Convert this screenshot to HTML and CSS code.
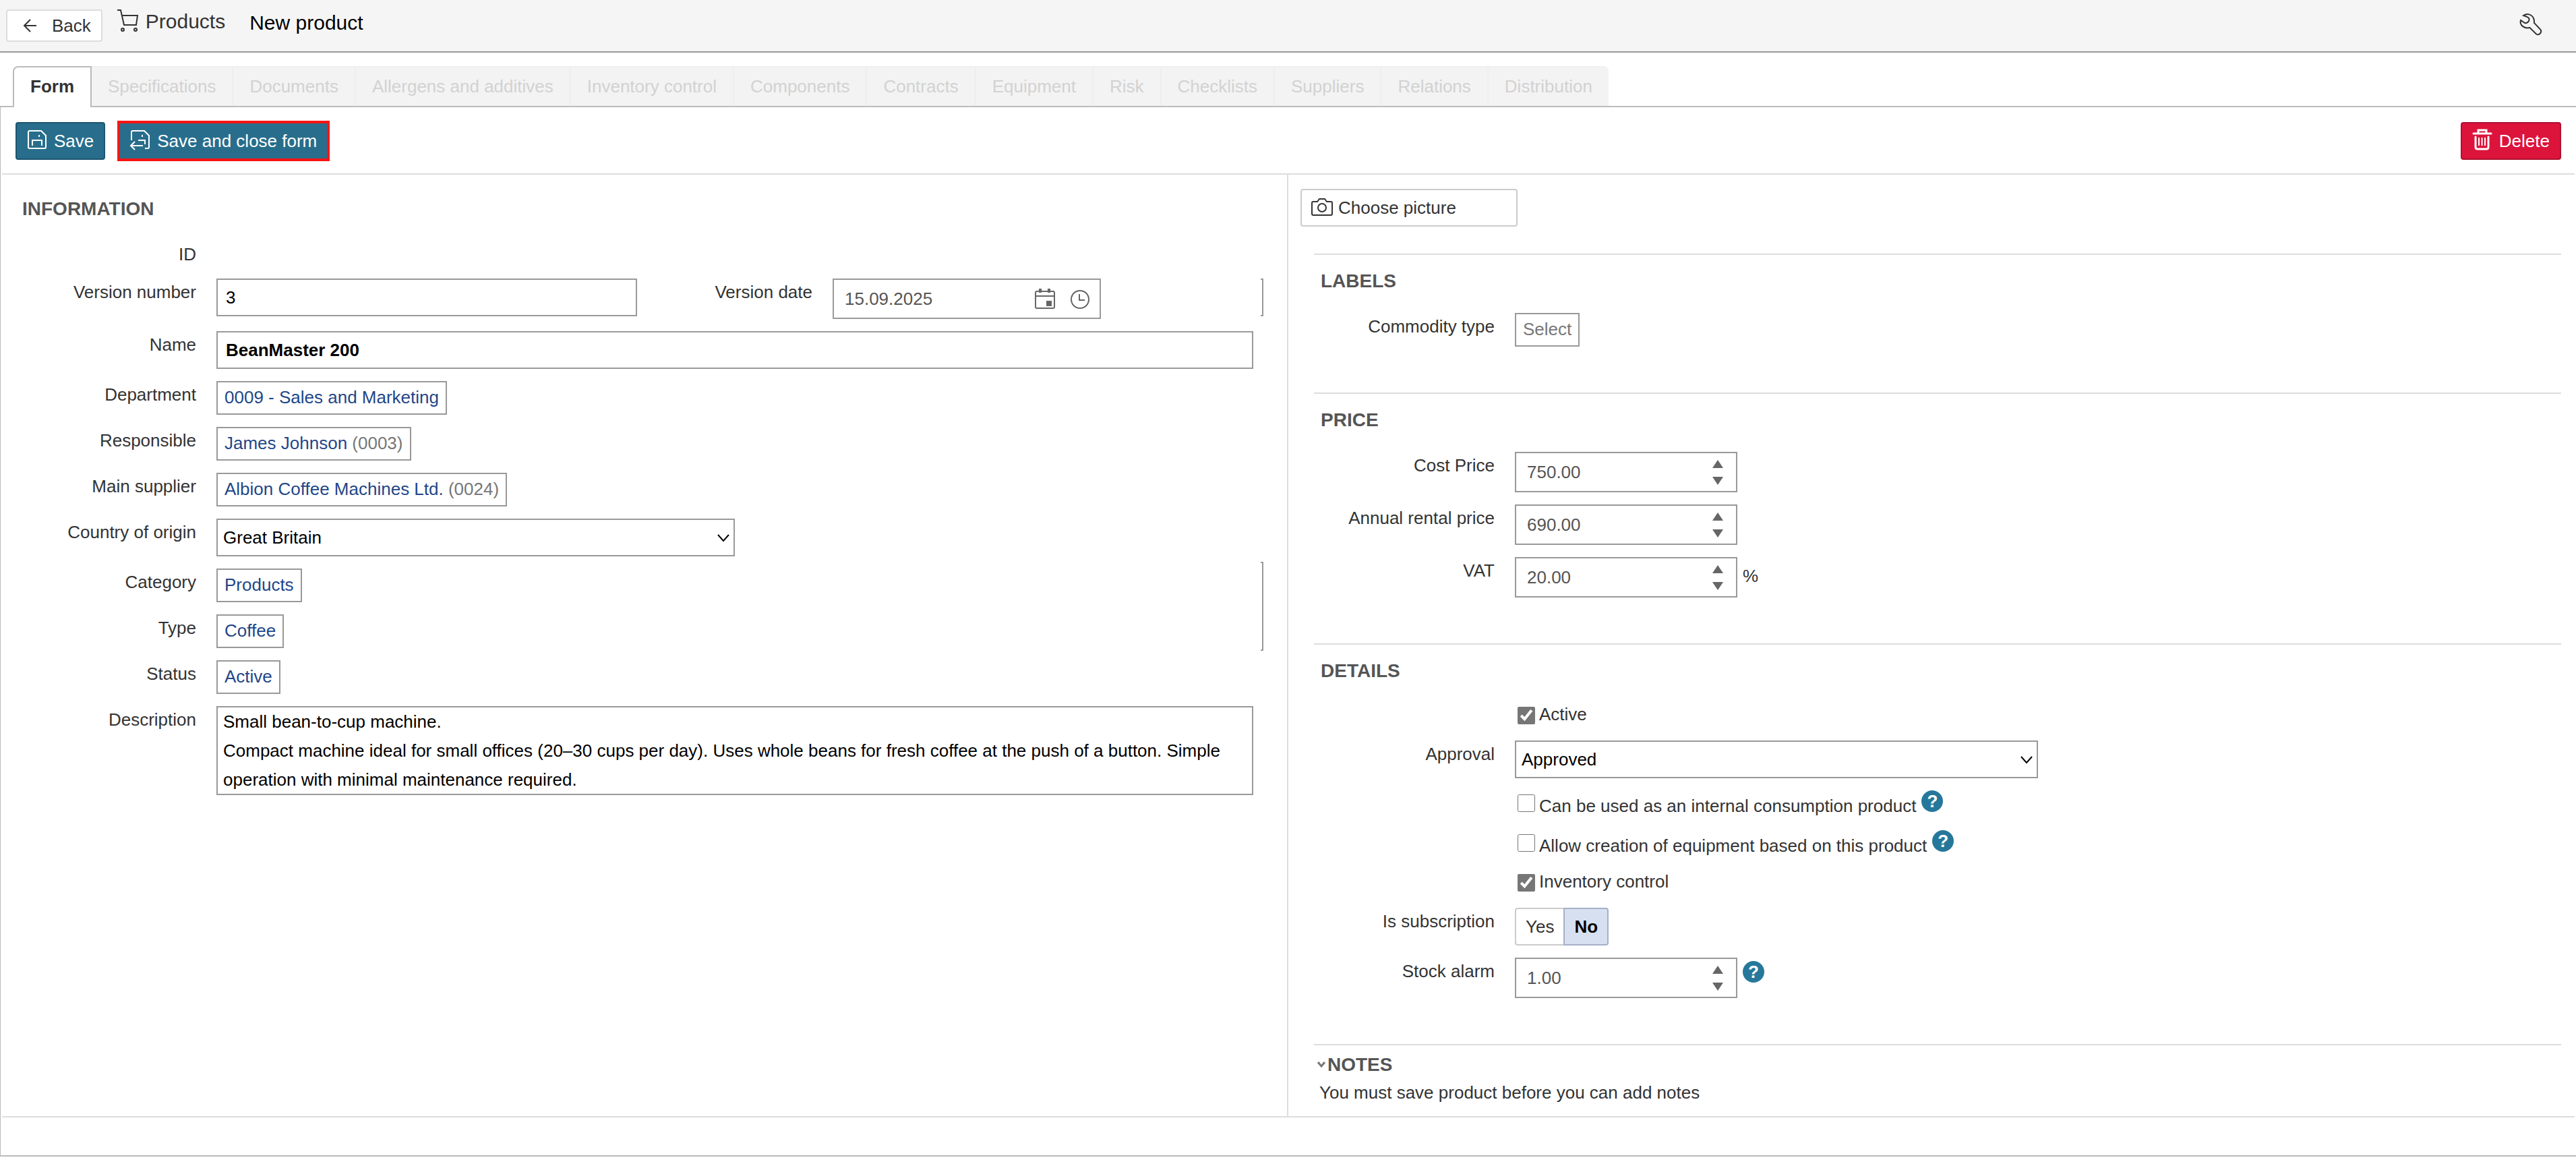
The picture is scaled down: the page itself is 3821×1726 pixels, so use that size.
FILE: index.html
```
<!DOCTYPE html>
<html lang="en">
<head>
  <meta charset="UTF-8" />
  <meta name="viewport" content="width=device-width, initial-scale=1.0"/>
  <title>New product - Products</title>
  <link rel="stylesheet" href="styles.css">
</head>
<body>

  <!-- TOP BAR -->
  <header class="top-bar">
    <button type="button" class="back-btn">
      <svg width="20" height="20" viewBox="0 0 20 20"><path d="M10 1 L1 10 L10 19 M1 10 H19" /></svg>
      Back
    </button>
    <a href="#" class="module-link">
      <svg width="34" height="34" viewBox="0 0 34 34">
        <path d="M0 1 H5 L10 23 H28 L30 9 H7" />
        <circle cx="8" cy="30" r="2" /><circle cx="27" cy="30" r="2" />
      </svg>
      Products
    </a>
    <h1>New product</h1>
    <button type="button" class="settings-btn" title="Settings">
      <svg width="34" height="34" viewBox="0 0 34 34">
        <path d="M6 4 C13 -1 23 4 22 15 L31.500 25 C34 29 29 34 25 31.500 L15.500 22 C7 24 0 18 2 11 L8 15 C12 16 15 12 14.500 9 C14 6 9 5 6 4 Z" />
      </svg>
    </button>
  </header>

  <!-- TABS -->
  <nav class="tabs">
    <button type="button" class="tab active">Form</button>
    <button type="button" class="tab" disabled>Specifications</button>
    <button type="button" class="tab" disabled>Documents</button>
    <button type="button" class="tab" disabled>Allergens and additives</button>
    <button type="button" class="tab" disabled>Inventory control</button>
    <button type="button" class="tab" disabled>Components</button>
    <button type="button" class="tab" disabled>Contracts</button>
    <button type="button" class="tab" disabled>Equipment</button>
    <button type="button" class="tab" disabled>Risk</button>
    <button type="button" class="tab" disabled>Checklists</button>
    <button type="button" class="tab" disabled>Suppliers</button>
    <button type="button" class="tab" disabled>Relations</button>
    <button type="button" class="tab" disabled>Distribution</button>
  </nav>

  <form class="panel">
    <div class="toolbar">
      <button type="button" class="btn save-btn">
        <svg width="30" height="30" viewBox="0 0 30 30">
          <path d="M4 0 H21 L28 7 V24 Q28 26 26 26 H4 Q2 26 2 24 V2 Q2 0 4 0 Z M8 22 V14 H22 V22 M18 6 V9" />
        </svg>
        Save
      </button>
      <button type="button" class="btn save-btn highlighted">
        <svg width="30" height="30" viewBox="0 0 30 30">
          <path d="M2 14 V2 Q2 0 4 0 H21 L28 7 V24 Q28 26 26 26 H22 M12 14 H22 V20 M18 6 V9 M7 16 L1 22 L7 28 M1 22 H19" />
        </svg>
        Save and close form
      </button>
      <button type="button" class="btn delete-btn">
        <svg width="30" height="30" viewBox="0 0 30 30">
          <path class="bin" d="M2 4 H28 M9 4 V-1 H21 V4 M5 9 V24 Q5 27 8 27 H21 Q24 27 24 24 V9" />
          <path d="M10 10 V22 M14.500 10 V22 M19 10 V22" />
        </svg>
        Delete
      </button>
    </div>

    <div class="columns">
      <!-- INFORMATION -->
      <div class="left-column">
        <h2>INFORMATION</h2>
        <div class="fields">
          <span class="label">ID</span>
          <div class="field"></div>

          <label class="label" for="versionNumber">Version number</label>
          <div class="field">
            <input type="text" class="text-input version-input" id="versionNumber" value="3" />
            <label class="label date-label" for="versionDate">Version date</label>
            <div class="input-box date-box">
              <input type="text" id="versionDate" value="15.09.2025" />
              <button type="button" title="Calendar">
                <svg width="30" height="32" viewBox="0 0 30 32">
                  <path d="M3 5 H27 Q29 5 29 7 V28 Q29 30 27 30 H3 Q1 30 1 28 V7 Q1 5 3 5 Z M1 12 H29" />
                  <path class="fill" d="M6 1 H10 V7 H6 Z M19 1 H23 V7 H19 Z M17 19 H25 V27 H17 Z" />
                </svg>
              </button>
              <button type="button" title="Clock">
                <svg width="30" height="32" viewBox="0 0 30 32">
                  <circle cx="15" cy="17" r="13" /><path d="M14 9 V18 H22" />
                </svg>
              </button>
            </div>
            <div class="bracket"></div>
          </div>

          <label class="label" for="productName">Name</label>
          <div class="field"><input type="text" class="text-input name-input" id="productName" value="BeanMaster 200" /></div>

          <span class="label">Department</span>
          <div class="field"><div class="chip"><a href="#">0009 - Sales and Marketing</a></div></div>

          <span class="label">Responsible</span>
          <div class="field"><div class="chip"><a href="#">James Johnson</a> (0003)</div></div>

          <span class="label">Main supplier</span>
          <div class="field"><div class="chip"><a href="#">Albion Coffee Machines Ltd.</a> (0024)</div></div>

          <label class="label" for="country">Country of origin</label>
          <div class="field">
            <div class="select-box">
              <select id="country"><option>Great Britain</option></select>
              <svg width="18" height="12" viewBox="0 0 18 12"><path d="M1 1 L9 10 L17 1" /></svg>
            </div>
          </div>

          <!-- category and type are linked -->
          <div class="linked">
            <div class="fields">
              <span class="label">Category</span>
              <div class="field"><div class="chip"><a href="#">Products</a></div></div>

              <span class="label">Type</span>
              <div class="field"><div class="chip"><a href="#">Coffee</a></div></div>
            </div>
            <div class="bracket"></div>
          </div>

          <span class="label">Status</span>
          <div class="field"><div class="chip"><a href="#">Active</a></div></div>

          <label class="label" for="description">Description</label>
          <div class="field">
            <textarea id="description" rows="3">Small bean-to-cup machine.
Compact machine ideal for small offices (20–30 cups per day). Uses whole beans for fresh coffee at the push of a button. Simple operation with minimal maintenance required.</textarea>
          </div>
        </div>
      </div>

      <div class="right-column">
        <button type="button" class="picture-btn">
          <svg width="32" height="28" viewBox="0 0 32 28">
            <path d="M3 5 H9 L12 1 H20 L23 5 H29 Q31 5 31 7 V23 Q31 25 29 25 H3 Q1 25 1 23 V7 Q1 5 3 5 Z" />
            <circle cx="16" cy="14" r="6" />
          </svg>
          Choose picture
        </button>

        <!-- LABELS -->
        <section>
          <h2>LABELS</h2>
          <div class="fields">
            <span class="label">Commodity type</span>
            <div class="field"><button type="button" class="chip">Select</button></div>
          </div>
        </section>

        <!-- PRICE -->
        <section>
          <h2>PRICE</h2>
          <div class="fields">
            <label class="label" for="costPrice">Cost Price</label>
            <div class="field">
              <div class="input-box number-box">
                <input type="text" id="costPrice" value="750.00" />
                <div class="spinner"><button type="button" class="up" title="Increase"></button><button type="button" class="down" title="Decrease"></button></div>
              </div>
            </div>

            <label class="label" for="rentalPrice">Annual rental price</label>
            <div class="field">
              <div class="input-box number-box">
                <input type="text" id="rentalPrice" value="690.00" />
                <div class="spinner"><button type="button" class="up" title="Increase"></button><button type="button" class="down" title="Decrease"></button></div>
              </div>
            </div>

            <label class="label" for="vat">VAT</label>
            <div class="field">
              <div class="input-box number-box">
                <input type="text" id="vat" value="20.00" />
                <div class="spinner"><button type="button" class="up" title="Increase"></button><button type="button" class="down" title="Decrease"></button></div>
              </div>
              <span class="unit">%</span>
            </div>
          </div>
        </section>

        <!-- DETAILS -->
        <section>
          <h2>DETAILS</h2>
          <div class="fields">
            <div class="field check">
              <input type="checkbox" id="active" checked />
              <label for="active">Active</label>
            </div>

            <label class="label" for="approval">Approval</label>
            <div class="field">
              <div class="select-box">
                <select id="approval"><option>Approved</option></select>
                <svg width="18" height="12" viewBox="0 0 18 12"><path d="M1 1 L9 10 L17 1" /></svg>
              </div>
            </div>

            <div class="field check with-help">
              <input type="checkbox" id="internalUse" />
              <label for="internalUse">Can be used as an internal consumption product</label>
              <button type="button" class="help">?</button>
            </div>

            <div class="field check with-help">
              <input type="checkbox" id="equipmentBase" />
              <label for="equipmentBase">Allow creation of equipment based on this product</label>
              <button type="button" class="help">?</button>
            </div>

            <div class="field check">
              <input type="checkbox" id="inventory" checked />
              <label for="inventory">Inventory control</label>
            </div>

            <span class="label">Is subscription</span>
            <div class="field toggle">
              <input type="radio" name="subscription" id="subYes" />
              <label for="subYes">Yes</label>
              <input type="radio" name="subscription" id="subNo" checked />
              <label for="subNo">No</label>
            </div>

            <label class="label" for="stockAlarm">Stock alarm</label>
            <div class="field">
              <div class="input-box number-box">
                <input type="text" id="stockAlarm" value="1.00" />
                <div class="spinner"><button type="button" class="up" title="Increase"></button><button type="button" class="down" title="Decrease"></button></div>
              </div>
              <button type="button" class="help stock-help">?</button>
            </div>
          </div>
        </section>

        <!-- NOTES -->
        <section class="notes">
          <h2><svg width="14" height="12" viewBox="0 0 14 12"><path d="M2 2 L7 8 L12 2" /></svg>NOTES</h2>
          <p>You must save product before you can add notes</p>
        </section>
      </div>
    </div>

    <div class="panel-footer"></div>
  </form>

</body>
</html>
```

FILE: styles.css
```
* {
  box-sizing: border-box;
  margin: 0;
  padding: 0;
}

body {
  font-family: "Liberation Sans", Arial, sans-serif;
  font-size: 26px;
  color: #333;
  background: #fff;
}

button, input, select, textarea {
  font: inherit;
  color: inherit;
}

button {
  cursor: pointer;
}

a {
  color: #1f4788;
  text-decoration: none;
}

svg {
  flex: none;
  overflow: visible;
  fill: none;
  stroke: currentColor;
  stroke-width: 2;
}

/* ===== TOP BAR ===== */
.top-bar {
  display: flex;
  align-items: flex-start;
  padding: 14px 50px 14px 9px;
  background-color: #f5f5f5;
  border-bottom: 2px solid #999;
}

.back-btn {
  display: flex;
  align-items: center;
  gap: 22px;
  height: 48px;
  padding: 0 15px 0 24px;
  background: #fff;
  border: 2px solid #ddd;
  border-radius: 4px;
}

.module-link {
  display: flex;
  gap: 8px;
  margin-left: 22px;
  font-size: 30px;
  line-height: 36px;
  color: #333;
}

.top-bar h1 {
  margin-left: 36px;
  font-size: 30px;
  font-weight: normal;
  line-height: 40px;
  color: #000;
}

.settings-btn {
  display: flex;
  margin-left: auto;
  padding-top: 5px;
  background: none;
  border: none;
}

/* ===== TABS ===== */
.tabs {
  display: flex;
  padding: 20px 0 0 19px;
  border-bottom: 2px solid #bbb;
}

.tab {
  height: 59px;
  padding: 0 24px;
  background-color: #f3f3f3;
  border: none;
  border-top: 2px solid #f0f0f0;
  border-right: 2px solid #eee;
  color: #d2d2d2;
  white-space: nowrap;
}

.tab:last-child {
  border-right: none;
  border-top-right-radius: 8px;
}

.tab.active {
  height: 61px;
  margin-bottom: -2px;
  padding-bottom: 2px;
  background: #fff;
  border: 2px solid #bbb;
  border-bottom: none;
  border-top-left-radius: 8px;
  color: #333;
  font-weight: bold;
}

/* ===== TOOLBAR ===== */
.panel {
  padding: 0 2px;
  border-left: 1px solid #bbb;
  border-bottom: 2px solid #bbb;
}

.toolbar {
  display: flex;
  gap: 20px;
  padding: 22px 20px 20px;
  border-bottom: 2px solid #ddd;
}

.btn {
  display: flex;
  align-items: center;
  gap: 10px;
  height: 56px;
  padding: 0 15px;
  border-radius: 4px;
  color: #fff;
}

.save-btn {
  background-color: #286e8c;
  border: 2px solid #1b5570;
}

.save-btn.highlighted {
  border-color: #fa1414;
  border-radius: 0;
  outline: 2px solid #fa1414;
}

.delete-btn {
  margin-left: auto;
  background-color: #dc143c;
  border: 2px solid #b01030;
}

.delete-btn .bin {
  stroke-width: 3;
  stroke-linecap: round;
}

/* ===== COLUMNS ===== */
.columns {
  display: grid;
  grid-template-columns: 1fr 1fr;
  border-bottom: 2px solid #ddd;
}

.left-column {
  padding: 31px 50px 31px 28px;
  border-right: 2px solid #ddd;
}

.right-column {
  padding: 21px 20px 0 18px;
}

h2 {
  margin-bottom: 27px;
  padding-left: 2px;
  font-size: 28px;
  line-height: 40px;
  color: #555;
}

section {
  margin-left: 20px;
  padding: 19px 0 68px 8px;
  border-top: 2px solid #ddd;
}

.panel-footer {
  height: 56px;
}

/* ===== FIELDS ===== */
.fields {
  display: grid;
  grid-template-columns: 260px 1fr;
  gap: 18px 30px;
}

.label {
  grid-column: 1;
  padding-top: 2px;
  line-height: 36px;
  text-align: right;
  white-space: nowrap;
}

.field {
  grid-column: 2;
  display: flex;
  align-items: flex-start;
}

.text-input {
  height: 56px;
  padding: 0 12px;
  border: 2px solid #999;
  color: #000;
}

.version-input {
  width: 624px;
}

.name-input {
  width: 100%;
  font-weight: bold;
}

.date-label {
  width: 260px;
  margin-right: 30px;
}

.input-box {
  display: flex;
  align-items: center;
  height: 60px;
  border: 2px solid #999;
  color: #555;
}

.input-box input {
  flex: 1;
  min-width: 0;
  height: 100%;
  padding-left: 16px;
  border: none;
  background: none;
}

.date-box {
  width: 398px;
  padding-right: 14px;
}

.date-box button {
  display: flex;
  margin-left: 22px;
  background: none;
  border: none;
  color: #666;
}

.date-box .fill {
  fill: #666;
  stroke: none;
}

.number-box {
  width: 330px;
  padding-right: 19px;
}

.spinner {
  display: flex;
  flex-direction: column;
  gap: 13px;
}

.spinner button {
  border: 8px solid transparent;
  background: none;
}

.spinner .up {
  border-top: none;
  border-bottom: 12px solid #666;
}

.spinner .down {
  border-bottom: none;
  border-top: 12px solid #666;
}

.unit {
  margin-left: 8px;
  line-height: 56px;
}

.chip {
  height: 50px;
  padding: 0 10px 2px;
  background: #fff;
  border: 2px solid #999;
  line-height: 44px;
  white-space: nowrap;
  color: #777;
}

.select-box {
  position: relative;
  width: 50%;
}

.select-box select {
  display: block;
  width: 100%;
  height: 56px;
  padding: 0 8px;
  appearance: none;
  background: #fff;
  border: 2px solid #999;
  border-radius: 0;
  color: #000;
}

/* arrow lies over the select */
.select-box svg {
  position: absolute;
  top: 23px;
  right: 8px;
  color: #000;
  pointer-events: none;
}

textarea {
  display: block;
  width: 100%;
  height: 132px;
  padding: 0 8px;
  border: 2px solid #999;
  line-height: 43px;
  color: #000;
  resize: none;
  overflow: hidden;
}

/* ===== LINKED FIELDS ===== */
.linked {
  grid-column: 1 / -1;
  display: flex;
}

.linked .fields {
  flex: 1;
}

.bracket {
  flex: none;
  width: 4px;
  height: 56px;
  margin-left: auto;
  margin-right: -15px;
  border: 2px solid #999;
  border-left: none;
}

.linked .bracket {
  height: auto;
  margin: -10px -15px -4px 11px;
}

/* ===== CHECKBOXES & TOGGLE ===== */
.check {
  min-height: 38px;
}

.check input {
  width: 26px;
  height: 26px;
  margin: 6px 6px 0 4px;
  accent-color: #767676;
}

.check label {
  line-height: 34px;
}

.check.with-help {
  min-height: 41px;
}

.check.with-help label {
  padding-top: 6px;
}

.help {
  width: 32px;
  height: 32px;
  margin-left: 8px;
  background-color: #26789b;
  border: none;
  border-radius: 50%;
  color: #fff;
  font-weight: bold;
  line-height: 32px;
}

.stock-help {
  margin-top: 5px;
}

.toggle input {
  position: absolute;
  opacity: 0;
}

.toggle label {
  height: 56px;
  padding: 0 14px;
  border: 2px solid #ccc;
  line-height: 52px;
}

.toggle label:first-of-type {
  border-right: none;
  border-radius: 4px 0 0 4px;
}

.toggle label:last-of-type {
  border-radius: 0 4px 4px 0;
}

.toggle input:checked + label {
  background-color: #d6e0f1;
  border-color: #a6b1c8;
  color: #000;
  font-weight: bold;
}

/* ===== PICTURE & NOTES ===== */
.picture-btn {
  display: flex;
  align-items: center;
  gap: 8px;
  width: 322px;
  height: 56px;
  margin-bottom: 40px;
  padding: 0 14px;
  background: #fff;
  border: 2px solid #ccc;
  border-radius: 4px;
}

.notes {
  padding-top: 9px;
  padding-bottom: 17px;
}

.notes h2 {
  display: flex;
  align-items: center;
  gap: 2px;
  margin-left: -6px;
  margin-bottom: 3px;
}

.notes h2 svg {
  stroke: #777;
  stroke-width: 3;
}

.notes p {
  line-height: 36px;
}
```
